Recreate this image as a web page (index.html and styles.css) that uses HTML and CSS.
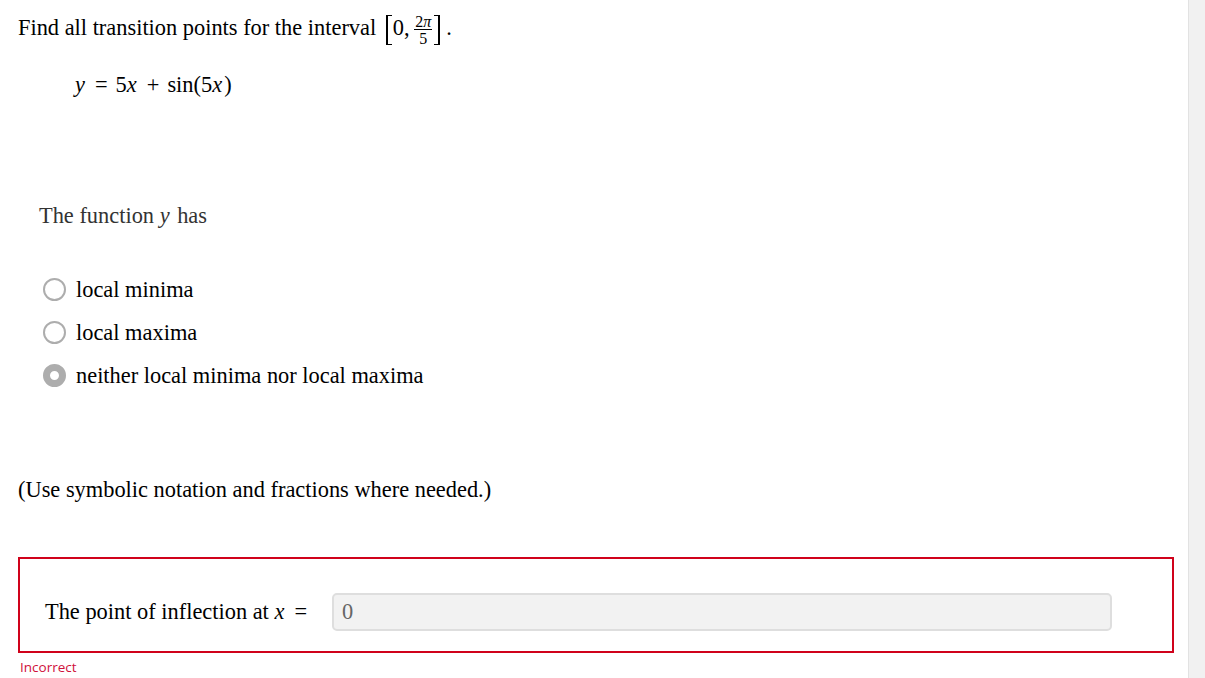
FILE: index.html
```html
<!DOCTYPE html>
<html lang="en">
<head>
<meta charset="utf-8">
<title>Transition points</title>
<link rel="stylesheet" href="styles.css">
</head>
<body>
<div class="page">
  <main class="content">
    <p class="question">Find all transition points for the interval <span class="interval"><span class="br br-l"></span><span class="num">0,</span> <span class="frac"><span class="frac-top">2<i>π</i></span><span class="frac-bot">5</span></span><span class="br br-r"></span></span><span class="dot">.</span></p>
    <p class="equation"><i class="var">y</i><span class="op">=</span>5<i class="var">x</i><span class="op">+</span>sin(5<i class="var">x</i>)</p>

    <p class="prompt">The function <i class="var">y</i> has</p>

    <ul class="options">
      <li class="option"><span class="radio"></span><span>local minima</span></li>
      <li class="option"><span class="radio"></span><span>local maxima</span></li>
      <li class="option"><span class="radio radio-on"></span><span>neither local minima nor local maxima</span></li>
    </ul>

    <p class="hint">(Use symbolic notation and fractions where needed.)</p>

    <div class="answer-box">
      <span class="answer-label">The point of inflection at <i class="var">x</i><span class="op">=</span></span>
      <div class="answer-input">0</div>
    </div>
    <div class="status">Incorrect</div>
  </main>
  <div class="scroll-track"></div>
</div>
</body>
</html>
```

FILE: styles.css
```css
* { box-sizing: border-box; }

html, body {
  margin: 0;
  padding: 0;
  background: #fff;
}

body {
  font-family: "Liberation Serif", "Times New Roman", serif;
  font-size: 22.4px;
  color: #000;
}

.page {
  display: flex;
  height: 678px;
  overflow: hidden;
}

.content {
  flex: 1;
  padding: 14px 14px 0 18px;
}

.scroll-track {
  width: 17px;
  flex: none;
  background: #f1f1f1;
  border-left: 1px solid #e2e2e2;
}

p { margin: 0; }

.var {
  font-style: italic;
  padding-right: 2px;
}

.question {
  line-height: 28px;
  height: 28px;
  white-space: nowrap;
}

.interval {
  margin-left: 4px;
}

.br {
  display: inline-block;
  width: 6px;
  height: 30px;
  border: solid #000;
  vertical-align: -10px;
}
.br-l { border-width: 1px 0 1px 2px; margin-right: 1px; }
.br-r { border-width: 1px 2px 1px 0; margin-left: 1px; }

.frac {
  display: inline-flex;
  flex-direction: column;
  align-items: center;
  font-size: 16px;
  line-height: 13px;
  vertical-align: 8px;
  margin-left: -2px;
  padding: 0 1px;
}
.frac-top {
  padding: 0 1px 1px;
  border-bottom: 1px solid #000;
  width: 100%;
  text-align: center;
}
.frac-bot { padding-top: 2px; }

.dot { margin-left: 6px; }

.equation {
  margin-top: 29px;
  margin-left: 57px;
  line-height: 28px;
}

.op {
  margin: 0 8px;
}

.prompt {
  margin-top: 103px;
  margin-left: 21px;
  line-height: 28px;
  color: #333;
}

.options {
  list-style: none;
  margin: 38px 0 0 25px;
  padding: 0;
}

.option {
  display: flex;
  align-items: center;
  height: 43px;
  line-height: 28px;
  gap: 10px;
}

.radio {
  width: 23px;
  height: 23px;
  border-radius: 50%;
  border: 2px solid #adadad;
  flex: none;
  margin-top: -1px;
}

.radio-on {
  border: 7px solid #adadad;
  background: #fff;
}

.hint {
  margin-top: 79px;
  line-height: 28px;
}

.answer-box {
  margin-top: 53px;
  height: 96px;
  border: 2px solid #d0021b;
  display: flex;
  align-items: center;
  padding: 14px 60px 0 25px;
  gap: 17px;
}

.answer-label {
  line-height: 28px;
  white-space: nowrap;
}

.answer-input {
  flex: 1;
  height: 38px;
  background: #f2f2f2;
  border: 2px solid #dedede;
  border-radius: 5px;
  color: #666;
  line-height: 34px;
  padding: 0 8px;
}

.status {
  margin: 6px 0 0 2px;
  font-family: "Open Sans", Lato, sans-serif;
  font-size: 13.5px;
  line-height: 16px;
  color: #d0103a;
}
```
